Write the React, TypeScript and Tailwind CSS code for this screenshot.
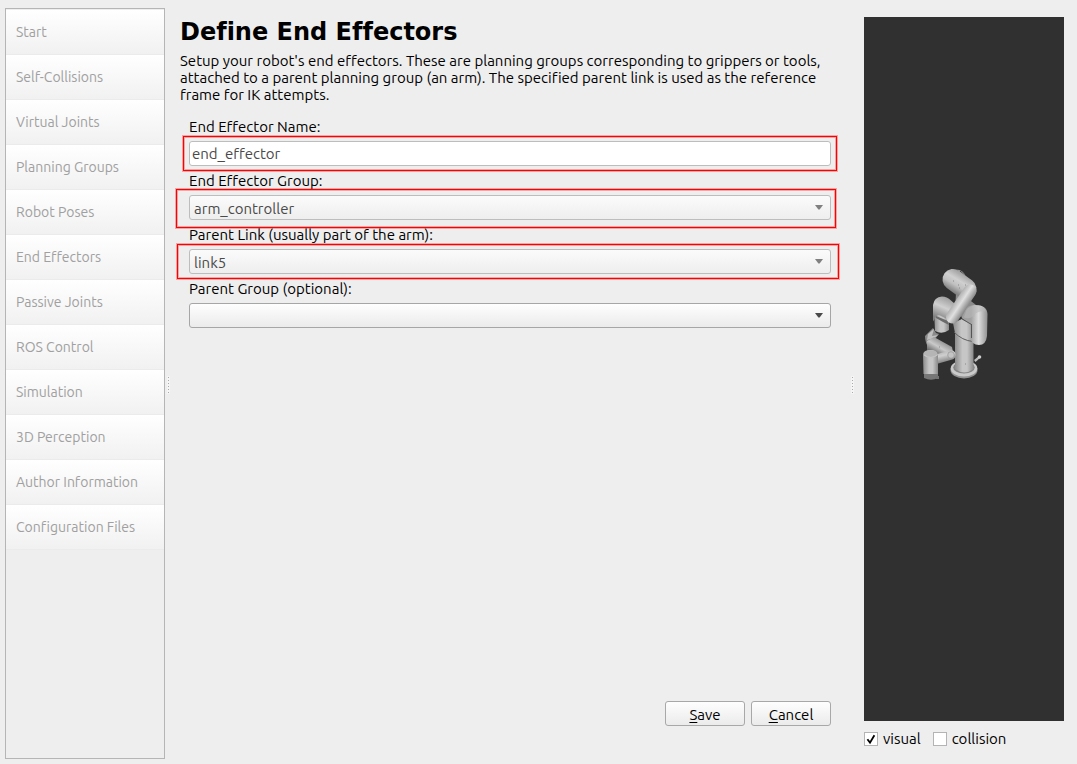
import { useState } from "react";
import type { ReactNode } from "react";

const steps = [
  "Start",
  "Self-Collisions",
  "Virtual Joints",
  "Planning Groups",
  "Robot Poses",
  "End Effectors",
  "Passive Joints",
  "ROS Control",
  "Simulation",
  "3D Perception",
  "Author Information",
  "Configuration Files",
];

function Splitter() {
  return (
    <div className="flex w-[7px] shrink-0 flex-col items-center justify-center gap-0.5 pt-1.5" aria-hidden="true">
      {[0, 1, 2, 3, 4, 5].map((i) => (
        <div key={i} className="h-px w-px bg-[#aaaaaa] ring-1 ring-white/40" />
      ))}
    </div>
  );
}

function Highlight({ className }: { className: string }) {
  return (
    <div
      aria-hidden="true"
      className={
        "pointer-events-none absolute z-10 border border-[#ff0000] ring-1 inset-ring-1 ring-[#ff0000]/30 inset-ring-[#ff0000]/30 " +
        className
      }
    />
  );
}

function Field({ id, label, children }: { id: string; label: string; children: ReactNode }) {
  return (
    <div className="flex flex-col">
      <label htmlFor={id} className="h-[25px] leading-[22px]">
        {label}
      </label>
      <div className="relative mb-1">{children}</div>
    </div>
  );
}

function Combo({ id, options, dim }: { id: string; options: string[]; dim?: boolean }) {
  return (
    <>
      <select
        id={id}
        className={
          "block h-[25px] w-full appearance-none rounded-[3px] border bg-linear-to-b pt-0.5 pl-1 " +
          (dim
            ? "border-[#bdbdbd] from-[#fbfbfb] to-[#eeeeee] text-[#4a4a4a]"
            : "border-[#a6a6a6] from-[#fefefe] to-[#ebebeb] text-black")
        }
      >
        {options.map((o) => (
          <option key={o}>{o}</option>
        ))}
      </select>
      <svg
        aria-hidden="true"
        viewBox="0 0 8 5"
        className={
          "pointer-events-none absolute top-2.5 right-2 h-[5px] w-2 " + (dim ? "fill-[#808080]" : "fill-[#4a4a4a]")
        }
      >
        <path d="M0 0h8L4.6 4.5h-1.2z" />
      </svg>
    </>
  );
}

function Check({ label, initial }: { label: string; initial: boolean }) {
  const [on, setOn] = useState(initial);
  return (
    <label className="flex items-center gap-[5px]">
      <span className="relative flex">
        <input
          type="checkbox"
          checked={on}
          onChange={(e) => setOn(e.target.checked)}
          className="h-3.5 w-3.5 appearance-none border border-[#b4b4b4] bg-white"
        />
        {on && (
          <svg viewBox="0 0 14 14" className="pointer-events-none absolute inset-0 h-3.5 w-3.5" aria-hidden="true">
            <path d="M3.4 7.2L6 10.6L10.4 3.2" fill="none" stroke="#000" strokeWidth="1.8" />
          </svg>
        )}
      </span>
      {label}
    </label>
  );
}

function Robot() {
  return (
    <svg viewBox="0 0 90 135" className="h-[135px] w-[90px]" role="img" aria-label="Robot arm model">
      <defs>
        <linearGradient id="tube" x1="0" x2="1" y1="0" y2="0">
          <stop offset="0" stopColor="#8c8c8c" />
          <stop offset=".4" stopColor="#c6c6c6" />
          <stop offset=".65" stopColor="#c6c6c6" />
          <stop offset="1" stopColor="#8a8a8a" />
        </linearGradient>
        <linearGradient id="right" gradientUnits="userSpaceOnUse" x1="61" y1="0" x2="78" y2="0">
          <stop offset="0" stopColor="#a0a0a0" />
          <stop offset=".45" stopColor="#dedede" />
          <stop offset="1" stopColor="#8c8c8c" />
        </linearGradient>
        <linearGradient id="upper" gradientUnits="userSpaceOnUse" x1="53" y1="17" x2="41" y2="37">
          <stop offset="0" stopColor="#999" />
          <stop offset=".4" stopColor="#d0d0d0" />
          <stop offset=".65" stopColor="#c0c0c0" />
          <stop offset="1" stopColor="#777" />
        </linearGradient>
        <linearGradient id="fore" gradientUnits="userSpaceOnUse" x1="45" y1="44" x2="57" y2="52">
          <stop offset="0" stopColor="#a6a6a6" />
          <stop offset=".5" stopColor="#e0e0e0" />
          <stop offset="1" stopColor="#8c8c8c" />
        </linearGradient>
        <linearGradient id="elbow" gradientUnits="userSpaceOnUse" x1="39" y1="44" x2="30" y2="64">
          <stop offset="0" stopColor="#a0a0a0" />
          <stop offset=".45" stopColor="#d0d0d0" />
          <stop offset="1" stopColor="#808080" />
        </linearGradient>
        <linearGradient id="low" gradientUnits="userSpaceOnUse" x1="31" y1="86" x2="24" y2="98">
          <stop offset="0" stopColor="#999" />
          <stop offset=".45" stopColor="#cacaca" />
          <stop offset="1" stopColor="#6d6d6d" />
        </linearGradient>
        <linearGradient id="wrist" gradientUnits="userSpaceOnUse" x1="33" y1="95" x2="36" y2="108">
          <stop offset="0" stopColor="#b2b2b2" />
          <stop offset=".4" stopColor="#cfcfcf" />
          <stop offset="1" stopColor="#777" />
        </linearGradient>
      </defs>

      {/* base */}
      <path d="M64 105l5-4 1.500 1.500-5 4.500z" fill="#bdbdbd" />
      <circle cx="69.500" cy="102" r="1.800" fill="#cecece" />
      <ellipse cx="54" cy="115" rx="13.500" ry="8.500" fill="#929292" />
      <ellipse cx="54" cy="113.500" rx="13.300" ry="8" fill="#cacaca" />
      <ellipse cx="54" cy="112.500" rx="10.800" ry="6" fill="#858585" />
      <path d="M45 76h18.500v38q-9 7-18.500 0z" fill="url(#tube)" />

      {/* shoulder and right link */}
      <path d="M43 68l9-4 12 6v17q-12 2-19-9z" fill="url(#tube)" />
      <path d="M44 77q8 8.500 19 9.500" fill="none" stroke="#5e5e5e" strokeWidth="1" />
      <path d="M46 39h6l14 11-6 14-15-4z" fill="#8b8b8b" />
      <path d="M55 56q2-6 10-6q12 0 12.500 9l-.5 22q-1 9-8 9q-7.500 0-8.500-7V69l-9-6z" fill="url(#right)" />
      <path d="M56 56q3-6 10-5.500q8 .5 10 6-9-1-13 5-4 3-9 1z" fill="#b8b8b8" opacity=".6" />
      <path d="M61.500 69v14M52 64l9.500 5.500" fill="none" stroke="#555" strokeWidth="1" />

      {/* left column and elbow */}
      <path d="M24 54h15v21q-7 5-14 1z" fill="url(#tube)" />
      <path d="M26 61l12 5 1 4-6-3-7-4z" fill="#6a6a6a" />
      <path d="M23 54V50q1-8 9-8.500q5 0 9 4l7 6-3 16q-4 0-7-3l-8-4q-3-2-5 3l-2 3z" fill="url(#elbow)" />

      {/* upper link */}
      <path d="M47 14.500q7 1 8.500 7l-6-4z" fill="#9b9b9b" />
      <path d="M50 16q3 2 5 5" fill="none" stroke="#333" strokeWidth="1" />
      <path d="M43 24.500L56 34" stroke="url(#upper)" strokeWidth="21" strokeLinecap="round" />
      <path d="M46 38l6 4 4 8-11 9z" fill="#8b8b8b" opacity=".5" />
      <path d="M60 36L42.500 62" stroke="url(#fore)" strokeWidth="13" strokeLinecap="round" />

      {/* lower left joint */}
      <path d="M15 81l8-8 3 5 3 1-4 5-6 9q-4-5-4-12z" fill="#8a8a8a" />
      <path d="M18 79l6-5-2 7 6-1-4 3-7 2z" fill="#c0c0c0" />
      <path d="M17 86l7-4 18 10 1 5-18 6-8-8z" fill="url(#low)" />
      <path d="M27 104L41 100" stroke="url(#wrist)" strokeWidth="9.500" strokeLinecap="round" />
      <circle cx="41" cy="100" r="3.300" fill="#c4c4c4" stroke="#949494" strokeWidth=".7" />
      <path d="M13 100q0-5 7.500-5t7.500 5v19H13.500z" fill="url(#tube)" />
      <path d="M14 119h14v4q-7 3.500-14 0z" fill="#777" />
      <ellipse cx="20.500" cy="99" rx="7" ry="3.800" fill="#b5b5b5" />
      <path d="M14 100q7 5 14-.5" fill="none" stroke="#cdcdcd" strokeWidth=".8" />
      <path d="M26 121h3v3h-3z" fill="#747474" />
      <path d="M43 26h1M48 30h1M49 33h1M55 30h1M55 109h1M29 92h1" stroke="#888" strokeWidth="1" />
    </svg>
  );
}

export default function App() {
  const [name, setName] = useState("end_effector");
  const button =
    "h-[25px] w-20 rounded-[3px] border border-[#a8a8a8] bg-linear-to-b from-[#fefefe] to-[#ebebeb] pt-0.5 text-black";

  return (
    <div className="flex min-h-screen bg-[#eeeeee] pl-[5px] font-['Ubuntu','Noto_Sans',sans-serif] text-[15px] text-black [font-variant-ligatures:none]">
      <nav className="mt-2 mb-[5px] w-40 shrink-0 border border-[#b5b5b5] pt-px text-[14px]" aria-label="Setup steps">
        <ul>
          {steps.map((s) => (
            <li key={s}>
              <button
                type="button"
                className="block h-[45px] w-full border-b border-[#ebebeb] bg-linear-to-b from-white to-[#f1f1f1] pl-2.5 text-left text-[#a0a0a0]"
              >
                {s}
              </button>
            </li>
          ))}
        </ul>
      </nav>
      <Splitter />
      <main className="flex min-w-0 grow flex-col pr-[13px] pb-[38px] pl-2">
        <h1 className="mt-[17px] font-['DejaVu_Sans',sans-serif] text-[24px] leading-[30px] font-bold">
          Define End Effectors
        </h1>
        <p className="mt-[5px] leading-[17px]">
          Setup your robot's end effectors. These are planning groups corresponding to grippers or tools, attached to a
          parent planning group (an arm). The specified parent link is used as the reference frame for IK attempts.
        </p>
        <form className="mt-[13px] flex grow flex-col pr-[5px] pl-[9px]" onSubmit={(e) => e.preventDefault()}>
          <Field id="name" label="End Effector Name:">
            <input
              id="name"
              value={name}
              onChange={(e) => setName(e.target.value)}
              className="block h-[25px] w-full rounded-[3px] border border-[#bdbdbd] bg-white px-0.5 text-[#4a4a4a]"
            />
            <Highlight className="-top-[5px] -right-1.5 -bottom-[5px] -left-1.5" />
          </Field>
          <Field id="group" label="End Effector Group:">
            <Combo id="group" options={["arm_controller"]} dim />
            <Highlight className="-top-1.5 -right-[5px] -bottom-2 -left-[13px]" />
          </Field>
          <Field id="link" label="Parent Link (usually part of the arm):">
            <Combo id="link" options={["link5"]} dim />
            <Highlight className="-top-[5px] -right-2 -bottom-[5px] -left-3" />
          </Field>
          <Field id="parent" label="Parent Group (optional):">
            <Combo id="parent" options={[""]} />
          </Field>
          <div className="mt-auto flex justify-end gap-1.5">
            <button type="submit" className={button}>
              <span className="underline underline-offset-2">S</span>ave
            </button>
            <button type="button" className={button}>
              <span className="underline underline-offset-2">C</span>ancel
            </button>
          </div>
        </form>
      </main>
      <Splitter />
      <aside className="flex w-[221px] shrink-0 flex-col pt-[17px] pr-[13px] pb-[15px] pl-2">
        <div className="flex grow items-start bg-[#303030] pt-[238px] pl-[46px]">
          <Robot />
        </div>
        <div className="mt-2 flex h-5 items-center gap-3">
          <Check label="visual" initial={true} />
          <Check label="collision" initial={false} />
        </div>
      </aside>
    </div>
  );
}
